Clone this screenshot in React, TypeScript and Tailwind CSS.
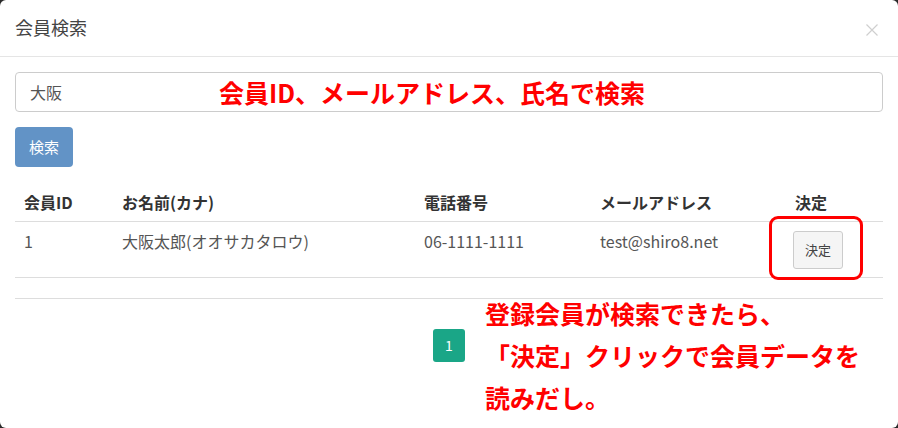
import React from 'react';

const font = { fontFamily: '"Noto Sans CJK JP", "Noto Sans", sans-serif' };

const cols = [
  { label: '会員ID', w: 'w-[98px]' },
  { label: 'お名前(カナ)', w: 'w-[302px]' },
  { label: '電話番号', w: 'w-[176px]' },
  { label: 'メールアドレス', w: 'w-[195px]' },
  { label: '決定', w: 'w-[97px]' },
];

export default function App() {
  return (
    <div className="w-[898px] h-[428px] bg-[#2a2a2a]" style={font}>
      <div className="relative w-full h-full bg-white rounded-[6px] overflow-hidden">
        {/* header */}
        <div className="flex items-center justify-between h-[57px] px-[15px] border-b border-[#e5e5e5]">
          <h4 className="text-[18px] leading-[26px] text-[#444] mt-[-2px]">会員検索</h4>
          <svg width="12" height="12" viewBox="0 0 12 12" className="mr-[5px] mt-[4px]">
            <path d="M0.5 0.5 L11.5 11.5 M11.5 0.5 L0.5 11.5" stroke="#cfcfcf" strokeWidth="1.2" />
          </svg>
        </div>

        {/* body */}
        <div className="px-[15px] pt-[15px]">
          <div className="relative">
            <div className="h-[40px] border border-[#ccc] rounded-[4px] flex items-center pl-[14px] text-[16px] text-[#555]">
              大阪
            </div>
            <div className="absolute left-[204px] top-[4px] text-[25px] leading-[32px] font-bold text-[#ff0000] whitespace-nowrap">
              会員ID、メールアドレス、氏名で検索
            </div>
          </div>

          <button className="mt-[15px] w-[58px] h-[40px] rounded-[4px] bg-[#6293c6] text-white text-[15px]">
            検索
          </button>

          {/* table */}
          <div className="relative mt-[16px]">
            <div className="flex border-b border-[#ddd] h-[39px] items-center">
              {cols.map((c) => (
                <div key={c.label} className={`${c.w} pl-[9px] text-[16px] font-bold text-[#333]`}>
                  {c.label}
                </div>
              ))}
            </div>
            <div className="flex border-b border-[#ddd] h-[56px] pt-[7px] text-[16px] text-[#555]">
              <div className="w-[98px] pl-[9px] leading-[24px]">1</div>
              <div className="w-[302px] pl-[9px] leading-[24px]">大阪太郎(オオサカタロウ)</div>
              <div className="w-[176px] pl-[9px] leading-[24px]">06-1111-1111</div>
              <div className="w-[195px] pl-[9px] leading-[24px]">test@shiro8.net</div>
              <div className="w-[97px] pl-[7px] pt-[2px]">
                <button className="w-[50px] h-[38px] border border-[#ccc] rounded-[3px] bg-[#f5f5f5] text-[13px] text-[#444]">
                  決定
                </button>
              </div>
            </div>
            <div className="absolute left-[754px] top-[33px] w-[94px] h-[64px] border-[3px] border-[#ff0000] rounded-[9px]" />
          </div>

          <div className="mt-[20px] border-t border-[#ddd]" />

          <div className="relative mt-[30px] flex justify-center">
            <div className="w-[32px] h-[33px] rounded-[3px] bg-[#1aa687] text-white text-[14px] flex items-center justify-center">
              1
            </div>
            <div className="absolute left-[470px] top-[-37px] text-[25px] leading-[42px] font-bold text-[#ff0000] whitespace-nowrap">
              <div>登録会員が検索できたら、</div>
              <div>「決定」クリックで会員データを</div>
              <div>読みだし。</div>
            </div>
          </div>
        </div>
      </div>
    </div>
  );
}
